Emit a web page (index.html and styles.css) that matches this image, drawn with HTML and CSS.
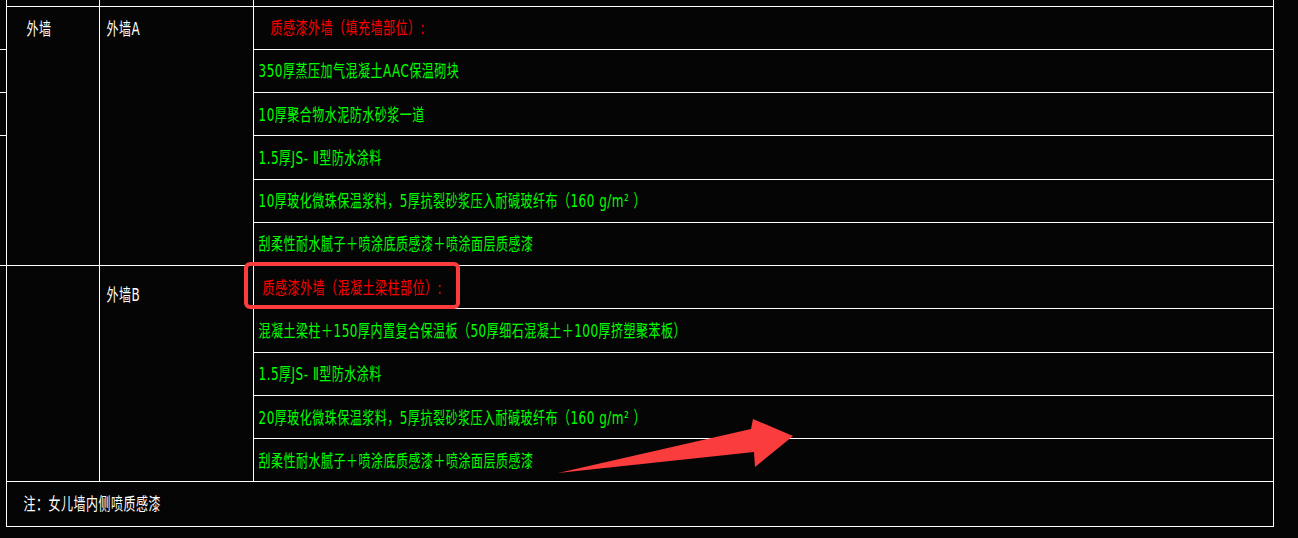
FILE: index.html
```html
<!DOCTYPE html>
<html>
  <head>
    <meta http-equiv="content-type" content="text/html; charset=UTF-8">
    <title>外墙做法表</title>
    <link rel="stylesheet" href="styles.css">
  </head>
  <body>
    <div class="sheet">
      <table class="grid">
        <colgroup>
          <col class="cEdge">
          <col class="cName">
          <col class="cSub">
          <col class="cItem">
        </colgroup>
        <tr class="stub"><td class="edge"></td><td></td><td></td><td></td></tr>
        <!-- 外墙A -->
        <tr>
          <td class="edge mark"></td>
          <td class="name" rowspan="6"><span class="t">外墙</span></td>
          <td class="sub" rowspan="6"><span class="t">外墙A</span></td>
          <td class="item head first"><span class="t">质感漆外墙（填充墙部位）:</span></td>
        </tr>
        <tr><td class="edge mark"></td><td class="item"><span class="t">350厚蒸压加气混凝土AAC保温砌块</span></td></tr>
        <tr><td class="edge mark"></td><td class="item"><span class="t">10厚聚合物水泥防水砂浆一道</span></td></tr>
        <tr><td class="edge"></td><td class="item"><span class="t">1.5厚JS- &#8545;型防水涂料</span></td></tr>
        <tr><td class="edge"></td><td class="item"><span class="t">10厚玻化微珠保温浆料，5厚抗裂砂浆压入耐碱玻纤布（160 g/m² ）</span></td></tr>
        <tr><td class="edge mark"></td><td class="item"><span class="t">刮柔性耐水腻子＋喷涂底质感漆＋喷涂面层质感漆</span></td></tr>
        <!-- 外墙B -->
        <tr>
          <td class="edge"></td>
          <td class="name" rowspan="5"></td>
          <td class="sub lower" rowspan="5"><span class="t">外墙B</span></td>
          <td class="item head"><span class="t">质感漆外墙（混凝土梁柱部位）:</span></td>
        </tr>
        <tr><td class="edge"></td><td class="item"><span class="t">混凝土梁柱＋150厚内置复合保温板（50厚细石混凝土＋100厚挤塑聚苯板）</span></td></tr>
        <tr><td class="edge"></td><td class="item"><span class="t">1.5厚JS- &#8545;型防水涂料</span></td></tr>
        <tr><td class="edge"></td><td class="item"><span class="t">20厚玻化微珠保温浆料，5厚抗裂砂浆压入耐碱玻纤布（160 g/m² ）</span></td></tr>
        <tr><td class="edge"></td><td class="item"><span class="t">刮柔性耐水腻子＋喷涂底质感漆＋喷涂面层质感漆</span></td></tr>
        <!-- 备注 -->
        <tr class="noteRow">
          <td class="edge"></td>
          <td class="note" colspan="3"><span class="t">注：女儿墙内侧喷质感漆</span></td>
        </tr>
      </table>

      <!-- markup drawn over the drawing -->
      <div class="callout"></div>
      <svg class="arrow" width="1298" height="538" viewBox="0 0 1298 538">
        <polygon points="558,473 751,429 753,419 793,436 755,467 754,452" fill="#fb3c3c"/>
      </svg>
    </div>
  </body>
</html>
```

FILE: styles.css
```css
:root {
  --background: rgb(5, 5, 5);
  --line: rgb(255, 255, 255);
  --green: rgb(0, 255, 0);
  --red: rgb(255, 0, 0);
  --markup: rgb(251, 60, 60);
}
html, body {
  margin: 0;
  background-color: var(--background);
}
body {
  color: var(--line);
  font-family: "DejaVu Sans", "Noto Sans CJK SC", sans-serif;
  font-size: 12px;
  letter-spacing: 0.5px;
}
.sheet {
  position: relative;
  width: 1298px;
  height: 538px;
  overflow: hidden;
}
.grid {
  border-collapse: collapse;
  table-layout: fixed;
  width: 1273px;
}
.cEdge { width: 6px; }
.cName { width: 93px; }
.cSub { width: 154px; }
.cItem { width: 1020px; }
.grid td {
  border: 1px solid var(--line);
  padding: 0;
  line-height: 16px;
  white-space: nowrap;
}
.grid tr { height: 43.27px; }
.grid tr.stub { height: 6px; }
.grid tr.stub td { border-top: none; }
.grid tr.noteRow { height: 45px; }
.grid td.edge {
  border-top: none;
  border-left: none;
  border-bottom: none;
}
.grid td.edge.mark { border-bottom: 1px solid var(--line); }
.grid tr.stub td.edge { border-bottom: none; }
.t {
  display: inline-block;
  transform: scaleY(1.45);
}
.name {
  vertical-align: top;
  padding: 14px 0 0 20px !important;
}
.sub {
  vertical-align: top;
  padding: 14px 0 0 7px !important;
}
.sub.lower { padding-top: 21px !important; }
.item {
  color: var(--green);
  vertical-align: middle;
  padding: 1px 0 0 5px !important;
}
.item.head { color: var(--red); padding-left: 9px !important; }
.item.head.first { padding-left: 17px !important; }
.note {
  vertical-align: middle;
  padding: 0 0 0 17px !important;
}
.callout {
  position: absolute;
  left: 244px;
  top: 262px;
  width: 208px;
  height: 39px;
  border: 4px solid var(--markup);
  border-radius: 6px;
}
.arrow {
  position: absolute;
  left: 0;
  top: 0;
}
```
